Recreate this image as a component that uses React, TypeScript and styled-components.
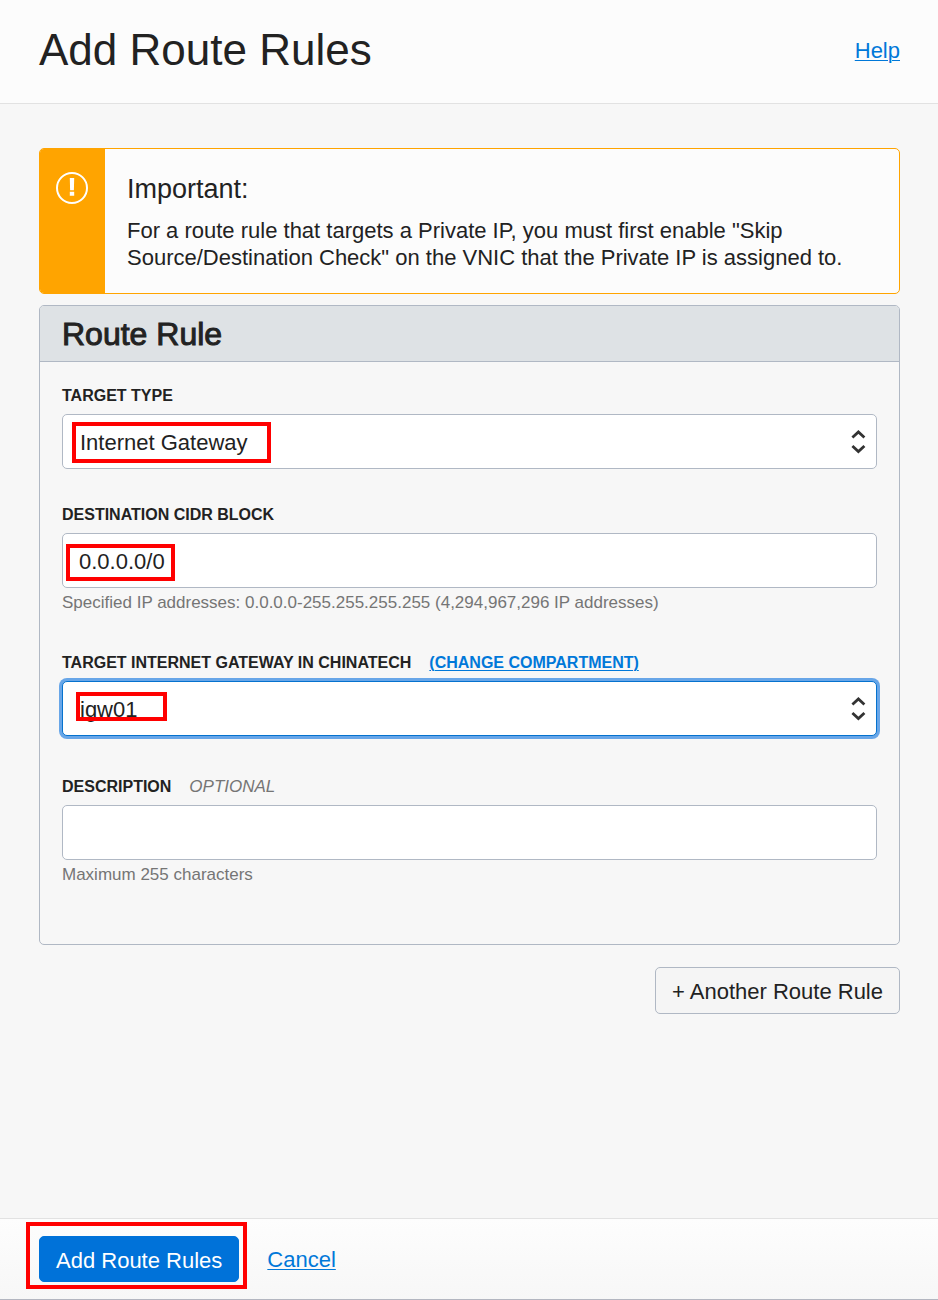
import React from "react";
import styled, { createGlobalStyle, css } from "styled-components";

const GlobalStyle = createGlobalStyle`
  *, *::before, *::after { box-sizing: border-box; }
  body {
    margin: 0;
    background: #f7f7f7;
    color: #222;
    font: 22px/27px "Liberation Sans", Arial, sans-serif;
  }
`;

const Page = styled.form`
  display: flex;
  flex-direction: column;
  min-height: 100vh;
`;

const Header = styled.header`
  display: flex;
  align-items: center;
  justify-content: space-between;
  padding: 22px 38px 25px 39px;
  background: #fcfcfc;
  border-bottom: 1px solid #e2e2e2;
`;

const Title = styled.h1`
  margin: 0;
  font-size: 44px;
  line-height: 56px;
  font-weight: 400;
`;

const Link = styled.a`
  color: #0078d9;
  text-decoration: underline;
  text-decoration-thickness: 1px;
  text-underline-offset: 2px;
`;

const Main = styled.main`
  flex: 1;
  display: flex;
  flex-direction: column;
  padding: 44px 38px 22px 39px;
`;

const Alert = styled.section`
  display: flex;
  margin-bottom: 11px;
  background: #fcfcfc;
  border: 1px solid #ffa400;
  border-radius: 5px;
  overflow: hidden;
`;

const AlertMark = styled.div`
  flex: none;
  width: 65px;
  padding: 22px 0 0 16px;
  background: #ffa400;
`;

const AlertBody = styled.div`
  padding: 22px;
`;

const AlertTitle = styled.h2`
  margin: 0 0 10px;
  font-size: 27px;
  line-height: 36px;
  font-weight: 400;
`;

const AlertText = styled.p`
  margin: 0;
`;

const Panel = styled.section`
  border: 1px solid #b0b8c4;
  border-radius: 5px;
  overflow: hidden;
`;

const PanelTitle = styled.h2`
  margin: 0;
  padding: 10px 22px 9px;
  background: #dee2e5;
  border-bottom: 1px solid #b0b8c4;
  font-size: 32px;
  line-height: 36px;
  font-weight: 400;
  -webkit-text-stroke: 1px #222;
`;

const PanelBody = styled.div`
  padding: 24px 22px 59px;
`;

const Field = styled.div<{ $space?: number }>`
  margin-bottom: ${(p) => p.$space ?? 0}px;
`;

const LabelRow = styled.div`
  display: flex;
  gap: 18px;
  margin-bottom: 8px;
  font-size: 16px;
  line-height: 20px;
  font-weight: 700;
`;

const Optional = styled.span`
  color: #757575;
  font-size: 17px;
  font-style: italic;
  font-weight: 400;
`;

const Control = styled.div`
  position: relative;
`;

const controlStyle = css`
  display: block;
  width: 100%;
  height: 55px;
  margin: 0;
  background: #fff;
  border: 1px solid #b0b8c4;
  border-radius: 5px;
  color: #222;
  font: inherit;
  outline: none;
`;

const Select = styled.select<{ $active?: boolean }>`
  ${controlStyle}
  appearance: none;
  padding: 2px 40px 0 17px;
  ${(p) =>
    p.$active &&
    css`
      border-color: #0572ce;
      box-shadow: 0 0 0 3px #68a6e8;
    `}
`;

const Input = styled.input`
  ${controlStyle}
  padding: 2px 16px 0;
`;

const Chevrons = styled.svg`
  position: absolute;
  top: 15px;
  right: 10px;
  pointer-events: none;
`;

const Hint = styled.p`
  margin: 5px 0 0;
  color: #757575;
  font-size: 17px;
  line-height: 20px;
`;

const Highlight = styled.span<{ $x: number; $y: number; $w: number; $h: number }>`
  position: absolute;
  left: ${(p) => p.$x}px;
  top: ${(p) => p.$y}px;
  width: ${(p) => p.$w}px;
  height: ${(p) => p.$h}px;
  border: 4px solid #f00;
  pointer-events: none;
`;

const Button = styled.button<{ $primary?: boolean }>`
  display: block;
  height: ${(p) => (p.$primary ? 46 : 47)}px;
  padding: 2px 16px 0;
  border: 1px solid ${(p) => (p.$primary ? "#0072d9" : "#b0b8c4")};
  border-radius: 5px;
  background: ${(p) => (p.$primary ? "#0072d9" : "#f5f5f5")};
  color: ${(p) => (p.$primary ? "#fff" : "#222")};
  font: inherit;
`;

const AddRow = styled.div`
  display: flex;
  justify-content: flex-end;
  margin-top: 22px;
`;

const Footer = styled.footer`
  display: flex;
  align-items: center;
  gap: 28px;
  padding: 17px 39px;
  background: linear-gradient(#fdfdfd, #f7f7f7);
  border-top: 1px solid #e2e2e2;
  border-bottom: 1px solid #b3b6c0;
`;

const UpDown = () => (
  <Chevrons width="18" height="26" viewBox="0 0 18 26" fill="none" stroke="#333" strokeWidth="2.8" aria-hidden="true">
    <path d="M3.4 8.5 L9.4 3 L15.4 8.5 M3.4 17 L9.4 22.5 L15.4 17" />
  </Chevrons>
);

export default function App() {
  return (
    <>
      <GlobalStyle />
      <Page onSubmit={(e) => e.preventDefault()}>
        <Header>
          <Title>Add Route Rules</Title>
          <Link href="#help">Help</Link>
        </Header>
        <Main>
          <Alert>
            <AlertMark>
              <svg width="34" height="34" viewBox="0 0 34 34" aria-hidden="true">
                <circle cx="16" cy="17" r="15" fill="none" stroke="#fff" strokeWidth="2" />
                <path d="M13.8 7h4.4l-.3 12.2h-3.8zM13.8 20.8h4.4v4h-4.4z" fill="#fff" />
              </svg>
            </AlertMark>
            <AlertBody>
              <AlertTitle>Important:</AlertTitle>
              <AlertText>
                For a route rule that targets a Private IP, you must first enable "Skip Source/Destination
                Check" on the VNIC that the Private IP is assigned to.
              </AlertText>
            </AlertBody>
          </Alert>
          <Panel>
            <PanelTitle>Route Rule</PanelTitle>
            <PanelBody>
              <Field $space={36}>
                <LabelRow>
                  <label htmlFor="target-type">TARGET TYPE</label>
                </LabelRow>
                <Control>
                  <Select id="target-type" defaultValue="igw">
                    <option value="igw">Internet Gateway</option>
                  </Select>
                  <UpDown />
                  <Highlight $x={10} $y={8} $w={199} $h={41} />
                </Control>
              </Field>
              <Field $space={40}>
                <LabelRow>
                  <label htmlFor="cidr">DESTINATION CIDR BLOCK</label>
                </LabelRow>
                <Control>
                  <Input id="cidr" type="text" defaultValue="0.0.0.0/0" aria-describedby="cidr-hint" />
                  <Highlight $x={4} $y={11} $w={109} $h={37} />
                </Control>
                <Hint id="cidr-hint">
                  Specified IP addresses: 0.0.0.0-255.255.255.255 (4,294,967,296 IP addresses)
                </Hint>
              </Field>
              <Field $space={41}>
                <LabelRow>
                  <label htmlFor="gateway">TARGET INTERNET GATEWAY IN CHINATECH</label>
                  <Link href="#compartment">(CHANGE COMPARTMENT)</Link>
                </LabelRow>
                <Control>
                  <Select id="gateway" defaultValue="igw01" $active>
                    <option value="igw01">igw01</option>
                  </Select>
                  <UpDown />
                  <Highlight $x={14} $y={11} $w={91} $h={29} />
                </Control>
              </Field>
              <Field>
                <LabelRow>
                  <label htmlFor="description">DESCRIPTION</label>
                  <Optional>OPTIONAL</Optional>
                </LabelRow>
                <Input id="description" type="text" maxLength={255} aria-describedby="description-hint" />
                <Hint id="description-hint">Maximum 255 characters</Hint>
              </Field>
            </PanelBody>
          </Panel>
          <AddRow>
            <Button type="button">+ Another Route Rule</Button>
          </AddRow>
        </Main>
        <Footer>
          <Control>
            <Button type="submit" $primary>
              Add Route Rules
            </Button>
            <Highlight $x={-13} $y={-14} $w={221} $h={67} />
          </Control>
          <Link href="#cancel">Cancel</Link>
        </Footer>
      </Page>
    </>
  );
}
